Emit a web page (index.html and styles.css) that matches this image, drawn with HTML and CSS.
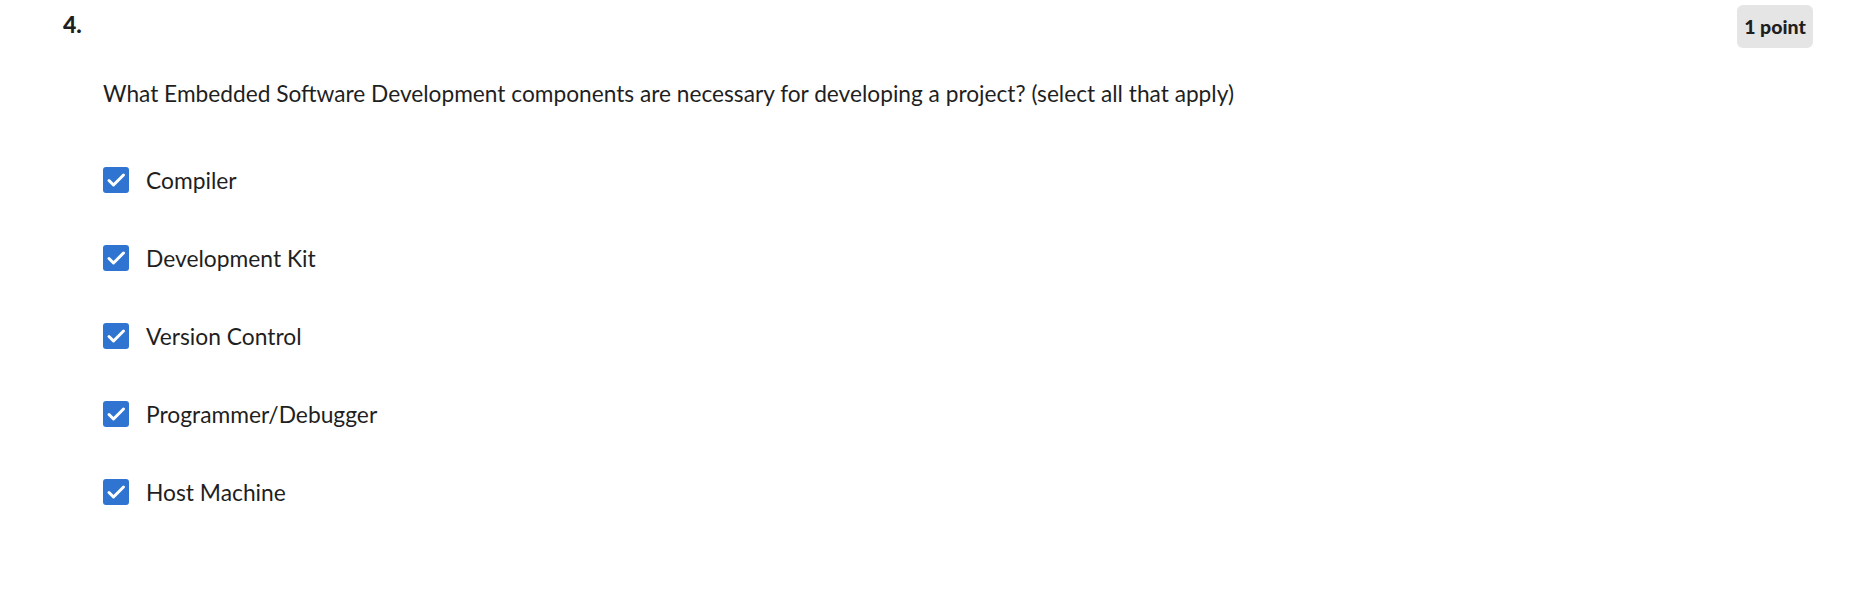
FILE: index.html
```html
<!DOCTYPE html>
<html>
<head>
<meta charset="utf-8">
<link rel="stylesheet" href="styles.css">
</head>
<body>
<div class="question">
  <div class="q-header">
    <div class="q-num">4.</div>
    <div class="q-points">1 point</div>
  </div>
  <div class="q-body">
    <p class="q-text">What Embedded Software Development components are necessary for developing a project? (select all that apply)</p>
    <div class="options">
      <label class="option"><span class="box"><svg viewBox="0 0 26 26" width="26" height="26"><polyline points="6,13.5 10.5,18 20.5,8" fill="none" stroke="#fff" stroke-width="3" stroke-linecap="round" stroke-linejoin="round"/></svg></span><span class="label">Compiler</span></label>
      <label class="option"><span class="box"><svg viewBox="0 0 26 26" width="26" height="26"><polyline points="6,13.5 10.5,18 20.5,8" fill="none" stroke="#fff" stroke-width="3" stroke-linecap="round" stroke-linejoin="round"/></svg></span><span class="label">Development Kit</span></label>
      <label class="option"><span class="box"><svg viewBox="0 0 26 26" width="26" height="26"><polyline points="6,13.5 10.5,18 20.5,8" fill="none" stroke="#fff" stroke-width="3" stroke-linecap="round" stroke-linejoin="round"/></svg></span><span class="label">Version Control</span></label>
      <label class="option"><span class="box"><svg viewBox="0 0 26 26" width="26" height="26"><polyline points="6,13.5 10.5,18 20.5,8" fill="none" stroke="#fff" stroke-width="3" stroke-linecap="round" stroke-linejoin="round"/></svg></span><span class="label">Programmer/Debugger</span></label>
      <label class="option"><span class="box"><svg viewBox="0 0 26 26" width="26" height="26"><polyline points="6,13.5 10.5,18 20.5,8" fill="none" stroke="#fff" stroke-width="3" stroke-linecap="round" stroke-linejoin="round"/></svg></span><span class="label">Host Machine</span></label>
    </div>
  </div>
</div>
</body>
</html>
```

FILE: styles.css
```css
* { box-sizing: border-box; }
html, body { margin: 0; padding: 0; background: #fff; }
body {
  font-family: Lato, "Liberation Sans", sans-serif;
  color: #1f1f1f;
}
.question {
  padding: 5px 37px 0 63px;
}
.q-header {
  display: flex;
  justify-content: space-between;
  align-items: flex-start;
}
.q-num {
  font-weight: 900;
  font-size: 23px;
  line-height: 24px;
  padding-top: 7px;
}
.q-points {
  background: #e5e5e5;
  border-radius: 6px;
  font-weight: 900;
  font-size: 19.5px;
  line-height: 43px;
  height: 43px;
  width: 76px;
  text-align: center;
  white-space: nowrap;
}
.q-body {
  padding-left: 40px;
}
.q-text {
  margin: 31px 0 0 0;
  font-size: 22.7px;
  line-height: 30px;
}
.options {
  display: flex;
  flex-direction: column;
  gap: 52px;
  margin-top: 58px;
}
.option {
  display: flex;
  align-items: center;
  gap: 17px;
  height: 26px;
  font-size: 22.8px;
}
.box {
  width: 26px;
  height: 26px;
  border-radius: 3px;
  background: #2f74d0;
  display: flex;
}
```
